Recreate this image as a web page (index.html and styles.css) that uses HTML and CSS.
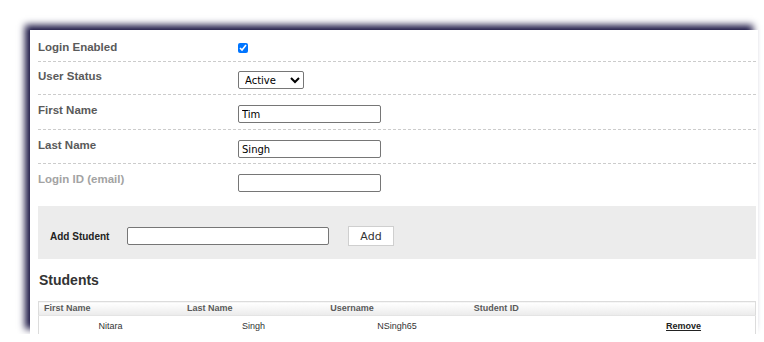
FILE: index.html
```html
<!DOCTYPE html>
<html lang="en">
<head>
    <meta charset="UTF-8">
    <meta name="viewport" content="width=device-width, initial-scale=1.0">
    <title>Edit Parent</title>
    <link rel="stylesheet" href="styles.css">
</head>
<body>

    <div class="panel">

        <!-- Account fields -->
        <div class="row row-first">
            <div class="label">Login Enabled</div>
            <div class="field"><input type="checkbox" class="check" checked></div>
        </div>
        <div class="row row-status">
            <div class="label">User Status</div>
            <div class="field">
                <select class="status">
                    <option>Active</option>
                    <option>Inactive</option>
                </select>
            </div>
        </div>
        <div class="row row-loose">
            <div class="label">First Name</div>
            <div class="field"><input type="text" class="text" value="Tim"></div>
        </div>
        <div class="row">
            <div class="label">Last Name</div>
            <div class="field"><input type="text" class="text" value="Singh"></div>
        </div>
        <div class="row row-last">
            <div class="label muted">Login ID (email)</div>
            <div class="field"><input type="text" class="text"></div>
        </div>

        <!-- Add student -->
        <div class="add-box">
            <div class="add-label">Add Student</div>
            <input type="text" class="add-input">
            <button class="add-btn">Add</button>
        </div>

        <h3 class="section-title">Students</h3>

        <table class="students">
            <thead>
                <tr>
                    <th>First Name</th>
                    <th>Last Name</th>
                    <th>Username</th>
                    <th>Student ID</th>
                    <th></th>
                </tr>
            </thead>
            <tbody>
                <tr>
                    <td>Nitara</td>
                    <td>Singh</td>
                    <td>NSingh65</td>
                    <td></td>
                    <td><a href="#" class="remove">Remove</a></td>
                </tr>
            </tbody>
        </table>
    </div>

</body>
</html>
```

FILE: styles.css
```css
body {
    margin: 0;
    font-family: "Liberation Sans", Arial, sans-serif;
    background: #fff;
}

.panel {
    margin: 30px 0 0 30px;
    width: 718px;
    height: 304px;
    padding: 0 2px 0 8px;
    background: #fff;
    box-shadow: -5px -5px 7px #1c1745;
}

.row {
    display: flex;
    align-items: flex-start;
    padding: 10px 0 5px;
    border-bottom: 1px dashed #ccc;
}

.row-first {
    padding: 12px 0 1px;
}

.row-status {
    padding-top: 9px;
}

.row-loose {
    padding-bottom: 6px;
}

.row-last {
    border-bottom: none;
}

.label {
    width: 200px;
    margin-top: -1px;
    font-size: 11.5px;
    line-height: 13px;
    font-weight: bold;
    color: #5a5a5a;
}

.label.muted {
    color: #a3a3a3;
}

.field {
    display: flex;
    height: 18px;
}

.check {
    width: 10px;
    height: 10px;
    margin: 1px 0 0;
    accent-color: #0075ff;
}

.status {
    width: 66px;
    height: 18px;
    padding: 0 2px;
    font-family: "DejaVu Sans", Verdana, sans-serif;
    font-size: 10px;
    color: #000;
    border: 1px solid #767676;
    border-radius: 2px;
    background: #fff;
}

.text {
    box-sizing: border-box;
    width: 143px;
    height: 18px;
    margin: 0;
    padding: 0 3px;
    font-family: "DejaVu Sans", Verdana, sans-serif;
    font-size: 10px;
    color: #000;
    border: 1px solid #767676;
    border-radius: 2px;
}

.add-box {
    display: flex;
    align-items: center;
    box-sizing: border-box;
    height: 53px;
    margin-top: 9px;
    padding: 7px 12px 0;
    background: #ececec;
}

.add-label {
    width: 77px;
    font-size: 10px;
    font-weight: bold;
    color: #222;
}

.add-input {
    box-sizing: border-box;
    width: 202px;
    height: 18px;
    margin: 0 19px 0 0;
    border: 1px solid #767676;
    border-radius: 2px;
}

.add-btn {
    box-sizing: border-box;
    width: 46px;
    height: 20px;
    padding: 0;
    font-family: "DejaVu Sans", Verdana, sans-serif;
    font-size: 11px;
    color: #333;
    background: #fff;
    border: 1px solid #cfcfcf;
}

.section-title {
    margin: 13px 0 13px 1px;
    font-size: 14px;
    line-height: 16px;
    color: #333;
}

.students {
    width: 718px;
    border-collapse: collapse;
    table-layout: fixed;
    border: 1px solid #dcdcdc;
}

.students th {
    height: 13px;
    padding: 0 5px;
    text-align: left;
    font-size: 9px;
    line-height: 13px;
    font-weight: bold;
    color: #5a5a5a;
    background: linear-gradient(#fff, #ebebeb);
    border-bottom: 1px solid #e4e4e4;
}

.students td {
    height: 20px;
    padding: 0;
    text-align: center;
    font-size: 9px;
    line-height: 11px;
    color: #333;
    border-bottom: 1px solid #d8d8d8;
}

.remove {
    font-weight: bold;
    color: #222;
}
```
